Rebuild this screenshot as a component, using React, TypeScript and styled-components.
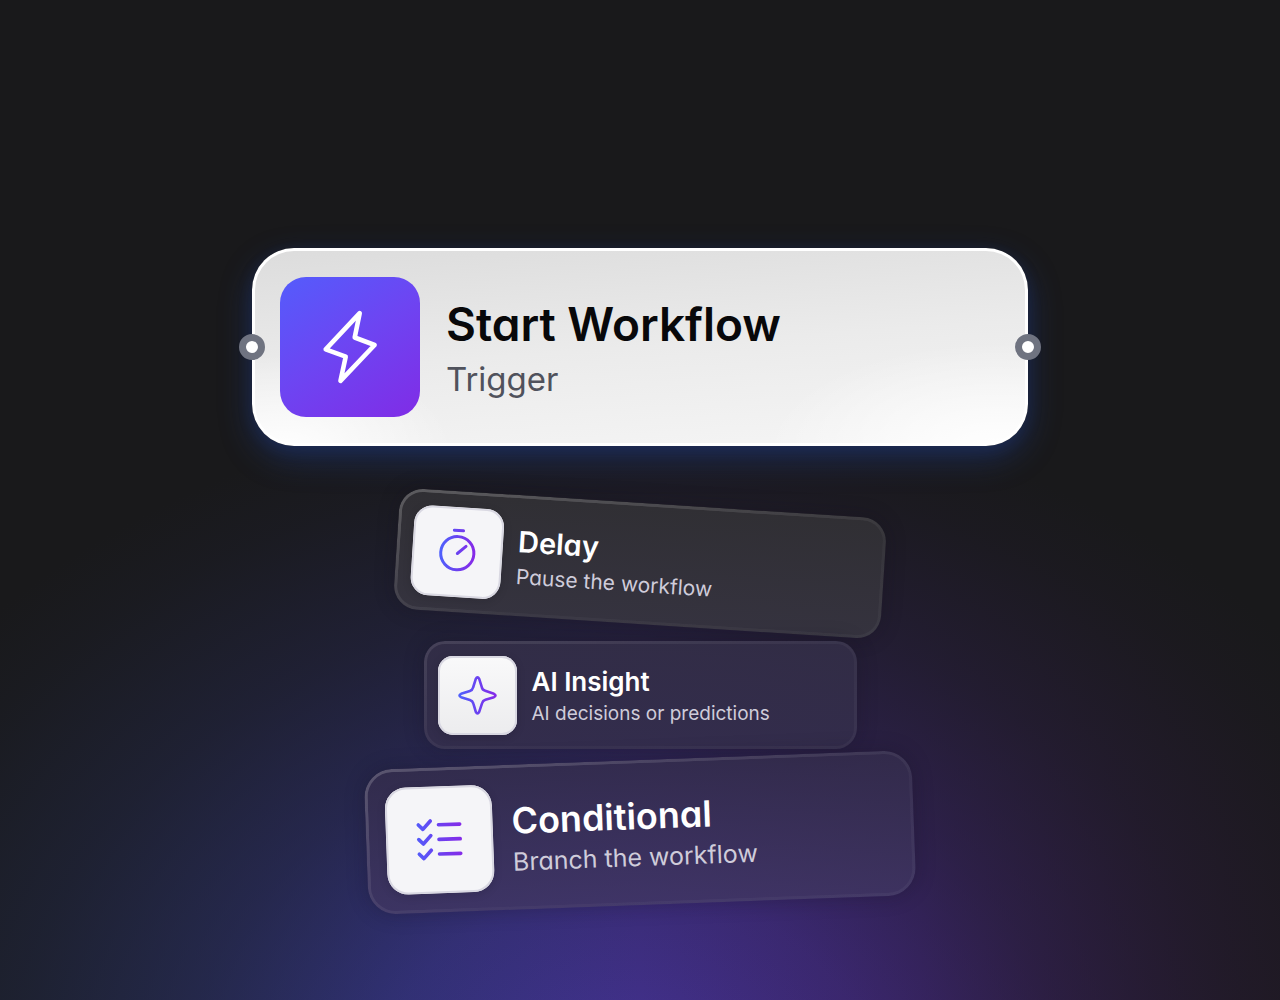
import React from "react";
import styled, { createGlobalStyle, css } from "styled-components";

const GlobalStyle = createGlobalStyle`
  * { box-sizing: border-box; }
  body {
    margin: 0;
    background: #19191b;
    font-family: Inter, "Open Sans", sans-serif;
    font-feature-settings: "cv11";
  }
`;

const Canvas = styled.main`
  min-height: 100vh;
  padding: 248px 24px 80px;
  display: flex;
  flex-direction: column;
  align-items: center;
  overflow: hidden;
  background:
    radial-gradient(
      ellipse 68% 68% at 49% 108%,
      rgba(25, 25, 27, 0),
      rgba(25, 25, 27, 0.03) 12%,
      rgba(25, 25, 27, 0.18) 28%,
      rgba(25, 25, 27, 0.52) 50%,
      rgba(25, 25, 27, 0.76) 70%,
      rgba(25, 25, 27, 0.94) 90%,
      #19191b
    ),
    linear-gradient(90deg, #2c3c78, #363688 30%, #41308a 50%, #42287c 72%, #3c1c50);
`;

type Size = "sm" | "md" | "lg" | "xl";

const sizes = {
  sm: { width: 433, height: 108, radius: 21, inset: 14, gap: 15, tile: 79, tileRadius: 15, title: 26, titleLine: 38, sub: 19, subLine: 26 },
  md: { width: 488, height: 121, radius: 24, inset: 16, gap: 15, tile: 90, tileRadius: 18, title: 29, titleLine: 42, sub: 21, subLine: 28 },
  lg: { width: 548, height: 145, radius: 28, inset: 20, gap: 19, tile: 107, tileRadius: 21, title: 36, titleLine: 48, sub: 25, subLine: 34 },
  xl: { width: 776, height: 198, radius: 42, inset: 28, gap: 26, tile: 140, tileRadius: 26, title: 46, titleLine: 64, sub: 33, subLine: 46 },
};

const Card = styled.article<{ $size: Size; $tilt?: number; $space?: number }>`
  position: relative;
  display: flex;
  align-items: center;
  width: 100%;
  flex-shrink: 0;
  ${({ $size, $tilt = 0, $space = 0 }) => {
    const s = sizes[$size];
    return css`
      max-width: ${s.width}px;
      min-height: ${s.height}px;
      border-radius: ${s.radius}px;
      padding: 0 ${s.inset}px;
      gap: ${s.gap}px;
      margin-top: ${$space}px;
      transform: rotate(${$tilt}deg);
    `;
  }}
`;

const TriggerCard = styled(Card)`
  background:
    radial-gradient(ellipse 30% 56% at 96% 104%, #ffffff, rgba(255, 255, 255, 0) 100%),
    radial-gradient(ellipse 22% 50% at 4% 104%, #ffffff, rgba(255, 255, 255, 0) 100%),
    linear-gradient(176deg, #dcdcdc, #ebebeb 50%, #f5f5f5 100%);
  box-shadow:
    inset 0 0 0 3px #ffffff,
    0 12px 32px rgba(32, 62, 145, 0.48),
    0 4px 16px rgba(32, 62, 145, 0.16);
`;

const StepCard = styled(Card)<{ $edge: number; $fill: [string, string] }>`
  background: linear-gradient(180deg, ${({ $fill }) => $fill[0]}, ${({ $fill }) => $fill[1]});
  box-shadow: 0 0 20px rgba(18, 15, 24, 0.28);

  &::before {
    content: "";
    position: absolute;
    inset: 0;
    padding: 3px;
    border-radius: inherit;
    background: linear-gradient(
      165deg,
      rgba(255, 255, 255, ${({ $edge }) => $edge}),
      rgba(255, 255, 255, 0.03) 60%,
      rgba(255, 255, 255, 0.04)
    );
    mask: linear-gradient(#000 0 0) content-box exclude, linear-gradient(#000 0 0);
    pointer-events: none;
  }
`;

const Tile = styled.div<{ $size: Size; $accent?: boolean }>`
  flex: none;
  display: grid;
  width: ${({ $size }) => sizes[$size].tile}px;
  height: ${({ $size }) => sizes[$size].tile}px;
  border-radius: ${({ $size }) => sizes[$size].tileRadius}px;
  ${({ $accent, $size }) =>
    $accent
      ? css`
          background: linear-gradient(145deg, #545cfc, #6d45f2 48%, #802ce6);
        `
      : css`
          background: ${$size === "sm" ? "linear-gradient(180deg, #f9f9fa, #ececee)" : "#f5f5f8"};
          box-shadow: inset 0 0 0 2px #d9d8e2, 0 2px 8px rgba(16, 14, 20, 0.15);
        `}
`;

const Icon = styled.svg`
  width: 100%;
  height: 100%;
  fill: none;
  stroke-linecap: round;
  stroke-linejoin: round;
`;

const Copy = styled.div`
  min-width: 0;
  white-space: nowrap;
`;

const Title = styled.h2<{ $size: Size; $dark?: boolean }>`
  margin: 0;
  font-weight: 600;
  font-size: ${({ $size }) => sizes[$size].title}px;
  line-height: ${({ $size }) => sizes[$size].titleLine}px;
  color: ${({ $dark }) => ($dark ? "#08080a" : "#ffffff")};
`;

const Subtitle = styled.p<{ $size: Size; $dark?: boolean }>`
  margin: 0;
  font-weight: 400;
  font-size: ${({ $size }) => sizes[$size].sub}px;
  line-height: ${({ $size }) => sizes[$size].subLine}px;
  color: ${({ $dark }) => ($dark ? "#50525c" : "#cfccda")};
`;

const Port = styled.span<{ $side: "left" | "right" }>`
  position: absolute;
  top: 50%;
  ${({ $side }) => $side}: 0;
  width: 26px;
  height: 26px;
  border: 7px solid #6f7380;
  border-radius: 50%;
  background: #ffffff;
  transform: translate(${({ $side }) => ($side === "left" ? "-50%" : "50%")}, -50%);
`;

function Ink({ id, from, to }: { id: string; from: number; to: number }) {
  return (
    <defs>
      <linearGradient id={id} gradientUnits="userSpaceOnUse" x1={from} y1="0" x2={to} y2="0">
        <stop offset="0" stopColor="#4f60fc" />
        <stop offset="0.5" stopColor="#6a42f0" />
        <stop offset="1" stopColor="#862ae8" />
      </linearGradient>
    </defs>
  );
}

function BoltIcon() {
  return (
    <Icon viewBox="0 0 140 140" stroke="#ffffff" strokeWidth="4.6" aria-hidden="true">
      <path d="M79.7 36.2 74.7 60.5 94.6 68 60.5 103.8 65.7 79.7 45.7 72.3Z" />
    </Icon>
  );
}

function TimerIcon() {
  return (
    <Icon viewBox="0 0 90 90" stroke="url(#timer-ink)" strokeWidth="3" aria-hidden="true">
      <Ink id="timer-ink" from={28} to={62} />
      <circle cx="45" cy="46" r="16.6" />
      <path d="M45.1 46.3 53.3 38.7" />
      <path d="M40.6 23.2 49.8 23.3" />
    </Icon>
  );
}

function SparkIcon() {
  return (
    <Icon viewBox="0 0 79 79" stroke="url(#spark-ink)" strokeWidth="2.6" aria-hidden="true">
      <Ink id="spark-ink" from={21} to={58} />
      <path d="M37.8 22.9Q39.5 19.8 41.2 22.9L43.8 31.2Q44.3 33.9 47.2 34.7L55.9 37.8Q59.1 39.5 55.9 41.2L47.4 43.8Q44.8 44.6 44.1 47.2L41.2 55.9Q39.5 59 37.8 55.9L35.3 47.4Q34.6 44.7 31.9 43.9L23.1 41.2Q19.9 39.5 23.1 37.8L31.9 34.9Q34.5 34.1 35.1 31.5Z" />
    </Icon>
  );
}

function ChecklistIcon() {
  return (
    <Icon viewBox="0 0 106 106" stroke="url(#checklist-ink)" strokeWidth="3.6" aria-hidden="true">
      <Ink id="checklist-ink" from={26} to={76} />
      {[38, 52.5, 67].map((y) => (
        <path key={y} d={`M32.4 ${y - 0.5}l4.4 4.5 7.6-8M52.4 ${y}l21 .1`} />
      ))}
    </Icon>
  );
}

interface StepProps {
  size: Size;
  title: string;
  subtitle: string;
  tilt?: number;
  space: number;
  edge: number;
  fill: [string, string];
  icon: React.ReactNode;
}

function Step({ size, title, subtitle, tilt, space, edge, fill, icon }: StepProps) {
  return (
    <StepCard $size={size} $tilt={tilt} $space={space} $edge={edge} $fill={fill}>
      <Tile $size={size}>{icon}</Tile>
      <Copy>
        <Title $size={size}>{title}</Title>
        <Subtitle $size={size}>{subtitle}</Subtitle>
      </Copy>
    </StepCard>
  );
}

export default function App() {
  return (
    <>
      <GlobalStyle />
      <Canvas>
        <TriggerCard $size="xl">
          <Port $side="left" />
          <Tile $size="xl" $accent>
            <BoltIcon />
          </Tile>
          <Copy>
            <Title $size="xl" $dark>Start Workflow</Title>
            <Subtitle $size="xl" $dark>Trigger</Subtitle>
          </Copy>
          <Port $side="right" />
        </TriggerCard>
        <Step
          size="md"
          title="Delay"
          subtitle="Pause the workflow"
          tilt={3.7}
          space={57}
          edge={0.22}
          fill={["rgba(50, 49, 53, 0.9)", "rgba(55, 53, 64, 0.9)"]}
          icon={<TimerIcon />}
        />
        <Step
          size="sm"
          title="AI Insight"
          subtitle="AI decisions or predictions"
          space={17}
          edge={0.1}
          fill={["rgba(52, 47, 72, 0.85)", "rgba(52, 46, 76, 0.85)"]}
          icon={<SparkIcon />}
        />
        <Step
          size="lg"
          title="Conditional"
          subtitle="Branch the workflow"
          tilt={-2.1}
          space={11}
          edge={0.2}
          fill={["rgba(52, 45, 76, 0.8)", "rgba(64, 54, 98, 0.8)"]}
          icon={<ChecklistIcon />}
        />
      </Canvas>
    </>
  );
}
